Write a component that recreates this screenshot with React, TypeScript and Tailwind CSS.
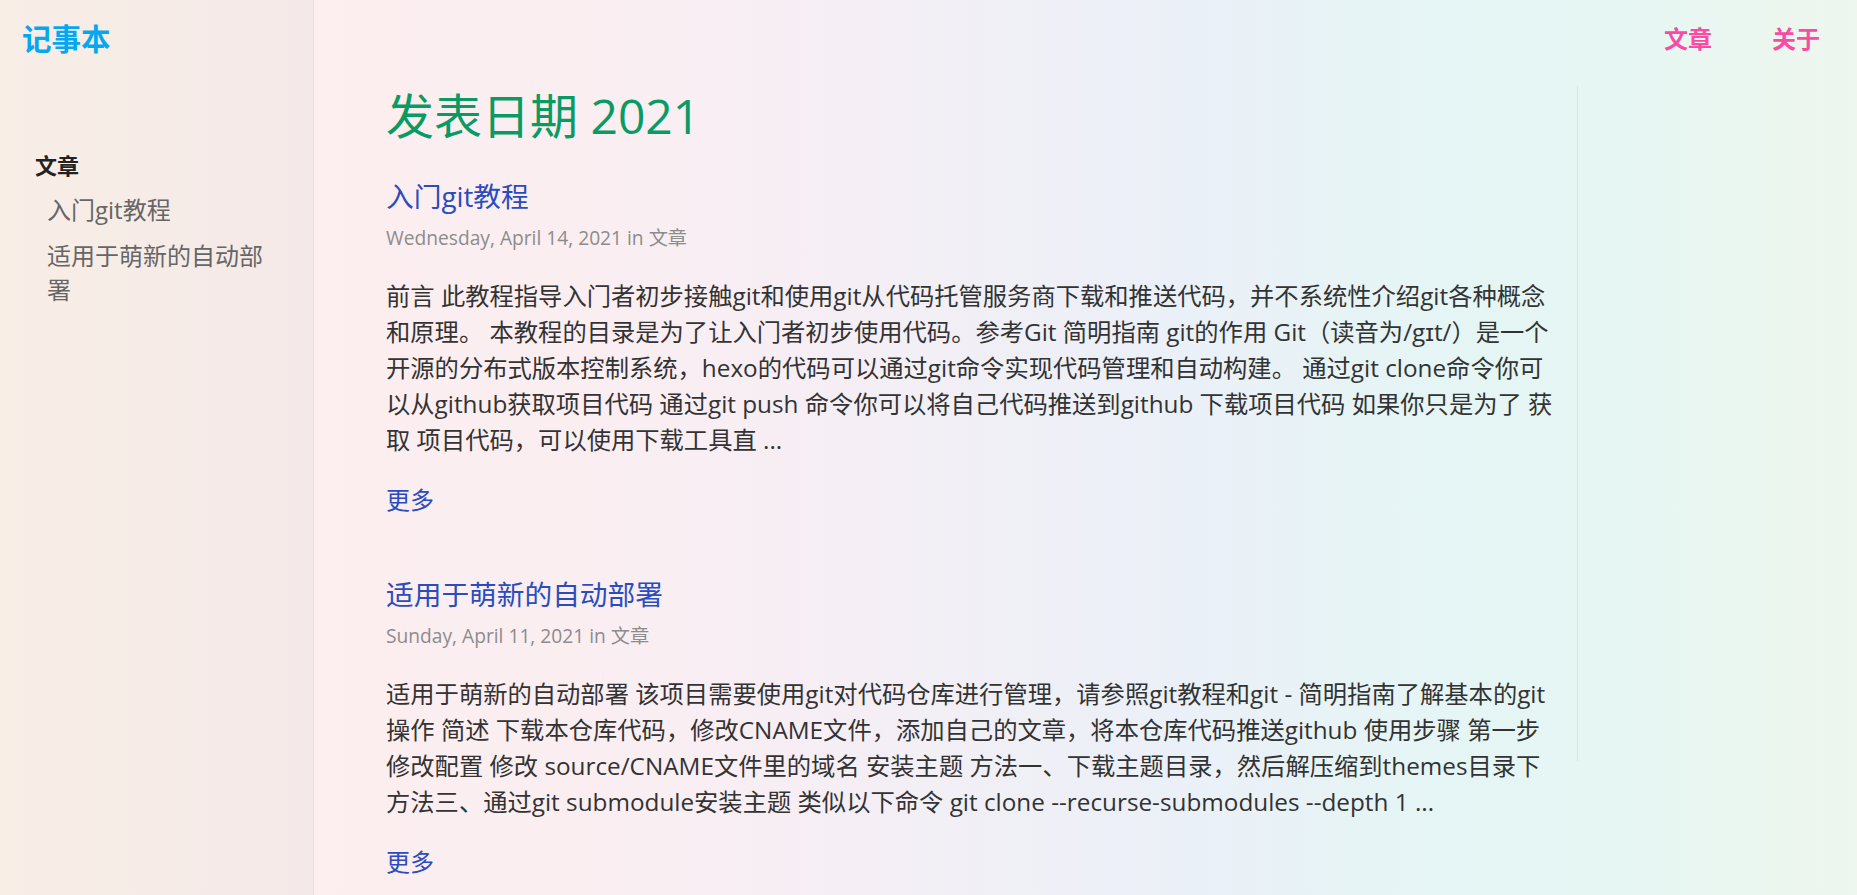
import { Fragment } from "react";

// 摘要按原页面的换行位置拆成行
const posts = [
  {
    title: "入门git教程",
    date: "Wednesday, April 14, 2021",
    lines: [
      "前言 此教程指导入门者初步接触git和使用git从代码托管服务商下载和推送代码，并不系统性介绍git各种概念",
      "和原理。 本教程的目录是为了让入门者初步使用代码。参考Git 简明指南 git的作用 Git（读音为/gɪt/）是一个",
      "开源的分布式版本控制系统，hexo的代码可以通过git命令实现代码管理和自动构建。 通过git clone命令你可",
      "以从github获取项目代码 通过git push 命令你可以将自己代码推送到github 下载项目代码 如果你只是为了 获",
      "取 项目代码，可以使用下载工具直 ...",
    ],
  },
  {
    title: "适用于萌新的自动部署",
    date: "Sunday, April 11, 2021",
    lines: [
      "适用于萌新的自动部署 该项目需要使用git对代码仓库进行管理，请参照git教程和git - 简明指南了解基本的git",
      "操作 简述 下载本仓库代码，修改CNAME文件，添加自己的文章，将本仓库代码推送github 使用步骤 第一步",
      "修改配置 修改 source/CNAME文件里的域名 安装主题 方法一、下载主题目录，然后解压缩到themes目录下",
      "方法三、通过git submodule安装主题 类似以下命令 git clone --recurse-submodules --depth 1 ...",
    ],
  },
];

export default function App() {
  return (
    <div className="flex min-h-screen w-full font-['Open_Sans','Noto_Sans_CJK_SC',sans-serif]">
      {/* 左侧栏 */}
      <aside className="w-[314px] shrink-0 border-r border-[#e8dde3] bg-[linear-gradient(90deg,#f8eee6,#f4e9e8)]">
        <div className="flex h-[78px] items-center pl-[22px]">
          <a href="#" className="text-[29.5px] font-bold leading-none text-[#05a8f0]">
            记事本
          </a>
        </div>
        <nav className="mt-[72px] pl-[35px]">
          <p className="text-[22px] font-bold leading-[30px] text-[#222]">文章</p>
          <ul className="mt-[13px] grid w-[240px] gap-[12px] pl-[12px]">
            {posts.map((p) => (
              <li key={p.title}>
                <a href="#" className="text-[24px] leading-[34px] text-[#666]">
                  {p.title}
                </a>
              </li>
            ))}
          </ul>
        </nav>
      </aside>

      {/* 主体 */}
      <div className="flex min-w-0 flex-1 flex-col bg-[linear-gradient(90deg,#fdeeef_0%,#f9eef3_25%,#ebf0f8_56%,#e6f4f5_69%,#e5f6f4_81%,#eef6ee_100%)]">
        <header className="flex h-[78px] items-center justify-end gap-[60px] pr-[37px]">
          <a href="#" className="text-[24px] font-bold leading-none text-[#fa4aa4]">
            文章
          </a>
          <a href="#" className="text-[24px] font-bold leading-none text-[#fa4aa4]">
            关于
          </a>
        </header>

        <div className="flex pt-[8px]">
          <main className="min-w-0 flex-1 pl-[72px] pr-[8px]">
            <h1 className="text-[48px] leading-[60px] text-[#099b63]">发表日期 2021</h1>
            {posts.map((p, i) => (
              <article key={p.title} className={i === 0 ? "mt-[30px]" : "mt-[56px]"}>
                <h2 className="text-[27.7px] leading-[40px] text-[#2a4cbf]">
                  <a href="#">{p.title}</a>
                </h2>
                <p className="mt-[9px] text-[19.2px] leading-[26px] text-[#8c8c8c]">
                  {p.date} in <a href="#">文章</a>
                </p>
                <p className="mt-[27px] text-[24.3px] leading-[36px] text-[#333]">
                  {p.lines.map((line, j) => (
                    <Fragment key={j}>
                      {j > 0 && <br />}
                      {line}
                    </Fragment>
                  ))}
                </p>
                <a href="#" className="mt-[24px] block text-[24px] leading-[36px] text-[#2a4cbf]">
                  更多
                </a>
              </article>
            ))}
          </main>
          <aside className="w-[280px] shrink-0">
            <div className="h-[675px] border-l border-[#dde3e3]" />
          </aside>
        </div>
      </div>
    </div>
  );
}
